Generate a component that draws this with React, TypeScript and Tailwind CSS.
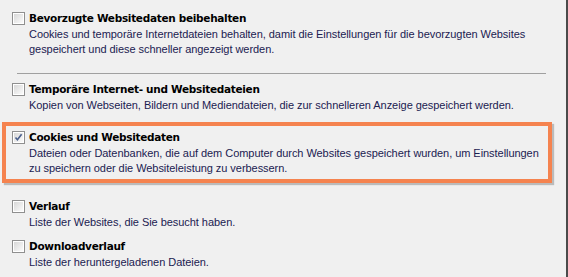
import * as React from "react";

type Item = {
  title: string;
  lines: string[];
  checked?: boolean;
};

const bottomItems: Item[] = [
  { title: "Verlauf", lines: ["Liste der Websites, die Sie besucht haben."] },
  { title: "Downloadverlauf", lines: ["Liste der heruntergeladenen Dateien."] },
];

export default function App() {
  return (
    <div className="w-[568px] h-[277px] overflow-hidden bg-[#f0f0f0] border-r-2 border-[#4a4a4a] flex flex-col pt-[11px]">
      <div className="pl-3">
        <Option
          item={{
            title: "Bevorzugte Websitedaten beibehalten",
            lines: [
              "Cookies und temporäre Internetdateien behalten, damit die Einstellungen für die bevorzugten Websites",
              "gespeichert und diese schneller angezeigt werden.",
            ],
          }}
        />
      </div>
      <div className="ml-[17px] w-[529px] mt-[16px] mb-[8px] h-px bg-[#a0a0a0]" />
      <div className="pl-3">
        <Option
          item={{
            title: "Temporäre Internet- und Websitedateien",
            lines: [
              "Kopien von Webseiten, Bildern und Mediendateien, die zur schnelleren Anzeige gespeichert werden.",
            ],
          }}
        />
      </div>
      <div className="ml-[2px] mt-[9px] w-[550px] border-4 border-[#f5834f] shadow-[2px_2px_1px_rgba(0,0,0,0.22)] pl-[6px] pt-[4px] pb-[3px]">
        <Option
          item={{
            title: "Cookies und Websitedaten",
            checked: true,
            lines: [
              "Dateien oder Datenbanken, die auf dem Computer durch Websites gespeichert wurden, um Einstellungen",
              "zu speichern oder die Websiteleistung zu verbessern.",
            ],
          }}
        />
      </div>
      <div className="pl-3 mt-[16px] flex flex-col gap-[9px]">
        {bottomItems.map((it) => (
          <Option key={it.title} item={it} />
        ))}
      </div>
    </div>
  );
}

function Option({ item }: { item: Item }) {
  return (
    <div className="flex items-start gap-[4px]">
      <div className="pt-[1px]">
        <CheckBox checked={item.checked} />
      </div>
      <div className="flex flex-col">
        <div className="font-['DejaVu_Sans',sans-serif] font-bold text-[10.5px] leading-[15px] text-black tracking-[-0.3px] mb-[1px]">
          {item.title}
        </div>
        {item.lines.map((l) => (
          <div
            key={l}
            className="font-['Liberation_Sans',sans-serif] text-[11px] leading-[15px] text-[#1b2150] tracking-[-0.05px] whitespace-nowrap"
          >
            {l}
          </div>
        ))}
      </div>
    </div>
  );
}

function CheckBox({ checked }: { checked?: boolean }) {
  return (
    <div className="size-[13px] border border-[#8f8f8f] bg-white p-px">
      <div className="size-full bg-linear-to-br from-[#d8d8d8] to-[#fbfbfb] relative">
        {checked && (
          <svg viewBox="0 0 9 9" className="absolute inset-0 size-full">
            <path
              d="M1.5 4.6 L3.4 6.8 L7.6 1.2"
              fill="none"
              stroke="#4a5f8c"
              strokeWidth="1.6"
            />
          </svg>
        )}
      </div>
    </div>
  );
}
